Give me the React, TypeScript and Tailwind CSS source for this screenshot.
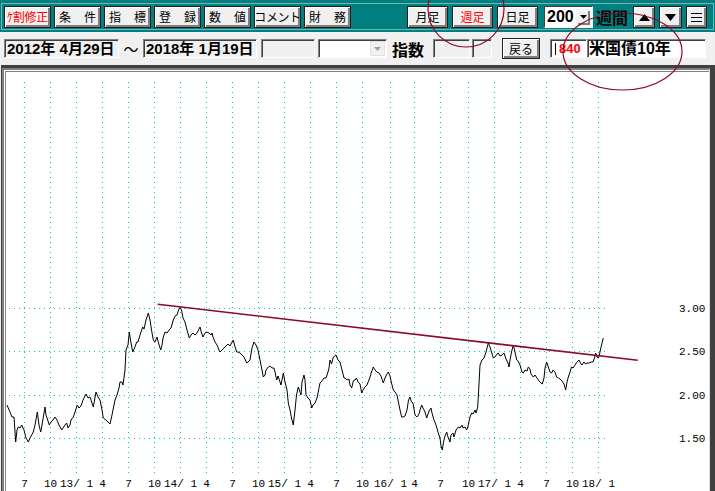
import clsx from 'clsx'
import type { ReactNode } from 'react'

const jp = "font-['Noto_Sans_CJK_JP','Noto_Sans',sans-serif]"
const mixed = "font-['Liberation_Sans','Noto_Sans_CJK_JP',sans-serif]"
const raised =
  'bg-[#f0f0f0] border border-[#202020] shadow-[inset_1px_1px_0_#ffffff,inset_-2px_-2px_0_#808080]'
const sunken =
  'border border-t-[#808080] border-l-[#808080] border-b-white border-r-white shadow-[inset_1px_1px_0_#404040]'

// weekly yield line, page coordinates
const series = [
  7, 405, 10, 412, 12, 417, 14, 417, 15.7, 442, 17, 430, 18.3, 427, 20, 428, 21.7, 425, 24, 430, 26, 438, 28.3, 442,
  30, 438, 33.3, 432, 35, 425, 37.3, 412, 39, 425, 40.7, 432, 42, 425, 45, 407, 46, 415, 47, 418, 49.3, 425, 51, 422,
  53, 420, 55, 417, 57, 420, 59, 425, 61.7, 430, 63, 428, 65, 425, 66.7, 423, 68, 428, 70, 425, 71, 420, 73.3, 417,
  75, 412, 77.3, 405, 79, 408, 81, 406, 83, 400, 86, 394, 88, 398, 90, 397, 92, 403, 93.3, 407, 96, 392, 98, 397, 100,
  400, 102, 410, 103.3, 418, 106, 420, 108, 422, 110, 424, 112, 415, 114, 405, 115, 400, 117, 395, 119, 388, 120, 382,
  122, 382, 123, 385, 125, 370, 126, 350, 128, 345, 129.3, 332, 130.5, 340, 132.7, 352, 134.5, 348, 136.7, 342, 138,
  342, 140, 335, 142.7, 327, 144, 329, 146, 320, 148.3, 313, 150, 320, 151.5, 330, 153.3, 340, 155, 342, 157, 337,
  158.5, 343, 160.7, 350, 162, 345, 163, 338, 165, 332, 167, 333, 169, 330, 171, 328, 173.3, 320, 175, 316, 177, 315,
  178.5, 310, 180, 307.3, 181.5, 310, 183, 318, 185, 322, 187, 330, 189.3, 338, 191, 335, 193, 333, 195, 335, 197, 333,
  198.5, 330, 200, 327, 201.5, 333, 203, 337, 205, 333, 207, 332, 209, 333, 211, 335, 212, 333, 213, 337, 215, 342,
  217, 345, 219, 350, 220, 352, 222, 350, 224, 348, 226, 346, 228, 344, 230, 346, 232, 342, 233.3, 340, 234.5, 345,
  236.7, 352, 238, 352, 240, 353, 242, 355, 244, 357, 246.7, 363, 248, 362, 250, 360, 252, 348, 254, 342, 256, 345,
  258, 350, 260, 360, 262, 370, 263.3, 377, 265, 375, 266, 370, 268.3, 367, 270, 366, 272, 368, 274, 368, 275, 372,
  276.7, 380, 278, 376, 280, 382, 281, 385, 283.3, 373, 285, 382, 287, 390, 288.3, 403, 290, 410, 291.5, 418, 293.3,
  425, 295, 410, 296.5, 395, 298.3, 387, 300, 392, 301, 395, 302, 382, 304, 375, 305, 380, 306, 395, 308, 398, 310,
  400, 311.7, 408, 313, 405, 315, 403, 317, 398, 319, 388, 320, 383, 322, 381, 324, 378, 326, 378, 328, 372, 329, 368,
  330, 360, 331.5, 364, 333, 358, 334.5, 356, 336, 355, 338, 360, 340, 362, 342, 370, 344, 378, 345, 378, 347, 380,
  349, 379, 350, 385, 351.7, 388, 353, 382, 354, 380, 355, 380, 356.5, 378, 358, 382, 360, 384, 361.7, 393, 363, 390,
  365, 387, 367, 385, 368.5, 381, 370, 377, 371.5, 372, 373.3, 367, 375, 370, 377, 372, 379, 373, 381, 376, 383.3, 383,
  385, 378, 387, 374, 388.3, 372, 390, 376, 391.5, 383, 393.3, 390, 395, 392, 397, 395, 398, 400, 400, 410, 401.7,
  417, 403, 417, 405, 416, 407, 410, 408.5, 400, 410, 397, 411.5, 402, 413, 403, 415, 415, 417, 417, 419, 414, 420,
  410, 421.7, 405, 423, 408, 425, 412, 426.7, 418, 428, 414, 429.5, 410, 431, 408, 432, 413, 434, 420, 436, 425,
  438.3, 433, 440, 438, 441, 446, 442.3, 450, 443.5, 442, 445, 436, 446.7, 432, 448, 437, 450, 442, 451, 435, 453,
  433, 454, 437, 456, 430, 458.3, 427, 460, 428, 462, 425, 463, 428, 465, 427, 466.7, 430, 468, 426, 470, 417, 471.7,
  413, 473, 414, 475, 410, 476, 413, 477.7, 407, 478.5, 393, 480, 365, 482, 360, 484, 358, 486, 352, 488.3, 343, 490,
  347, 491.5, 352, 493.3, 358, 495, 357, 497, 354, 498.3, 353, 500, 356, 502, 355, 504, 353, 506, 359, 508, 363, 509,
  367, 510, 360, 511.5, 352, 513.3, 345, 515, 352, 516.7, 360, 518, 361, 520, 365, 522, 372, 523.3, 373, 525, 370,
  527, 371, 528.3, 367, 530, 369, 531, 374, 533.3, 377, 535, 375, 537, 378, 539, 381, 541, 383, 542.3, 384, 544, 378,
  545, 368, 546.7, 362, 548, 366, 550, 372, 551.7, 373, 553, 370, 555, 372, 556.5, 377, 558.3, 378, 560, 379, 562,
  381, 564, 384, 565.7, 390, 567, 382, 568.3, 377, 570, 372, 571.5, 367, 573, 368, 575, 365, 577, 362, 579, 360,
  580.5, 363, 582, 365, 584, 362, 585.5, 364, 587, 363, 589, 363, 591, 362, 593, 362, 594.5, 358, 595.7, 353, 597,
  357, 598.5, 358, 600, 352, 601.5, 345, 603.3, 338,
]
const seriesPts = series.reduce<string[]>((acc, v, i) => {
  if (i % 2 === 1) acc.push(`${series[i - 1]},${v}`)
  return acc
}, [])

const gridX = [24, 50, 76, 102, 128, 154, 180, 206, 232, 258, 284, 310, 336, 362, 390, 414, 440, 468, 494, 520, 546, 572, 598]
const xLabels = ['7', '10', '13/ 1', '4', '7', '10', '14/ 1', '4', '7', '10', '15/ 1', '4', '7', '10', '16/ 1', '4', '7', '10', '17/ 1', '4', '7', '10', '18/ 1']
const gridY = [
  { y: 308, label: '3.00' },
  { y: 351, label: '2.50' },
  { y: 395, label: '2.00' },
  { y: 438, label: '1.50' },
]

function Btn({ children, className }: { children: ReactNode; className?: string }) {
  return (
    <div className={clsx('h-[22px] shrink-0 flex items-center text-[12px] leading-none whitespace-nowrap overflow-hidden', raised, className)}>
      {children}
    </div>
  )
}

function Spread({ a, b }: { a: string; b: string }) {
  return (
    <Btn className="w-[47px] justify-between px-[4px] text-black">
      <span>{a}</span>
      <span>{b}</span>
    </Btn>
  )
}

function Tri({ down }: { down?: boolean }) {
  return (
    <svg width="11" height="7" viewBox="0 0 11 7">
      <polygon points={down ? '0,0 11,0 5.5,7' : '5.5,0 11,7 0,7'} fill="#000" />
    </svg>
  )
}

export default function App() {
  return (
    <div className={clsx('relative w-[715px] h-[491px] overflow-hidden bg-[#f0f0f0] flex flex-col', jp)}>
      {/* toolbar */}
      <div className="h-[32px] shrink-0 bg-[#008080] pt-[3px] px-[1px]">
        <div className="h-[27px] border border-[#7fb3b3] flex items-start pt-[2px] pl-[2px]">
          <div className="flex gap-[3px]">
            <Btn className="w-[47px] justify-center text-[11px] tracking-[-0.3px] text-[#ff0000]">ｹ割修正</Btn>
            <Spread a="条" b="件" />
            <Spread a="指" b="標" />
            <Spread a="登" b="録" />
            <Spread a="数" b="値" />
            <Btn className="w-[47px] justify-center text-[11px] tracking-[-0.4px] text-black">コメント</Btn>
            <Spread a="財" b="務" />
          </div>
          <div className="ml-[56px] flex gap-[4px]">
            <Btn className="w-[41px] justify-center">月足</Btn>
            <Btn className="w-[41px] justify-center text-[#ff0000]">週足</Btn>
            <Btn className="w-[41px] justify-center">日足</Btn>
          </div>
          <div className="ml-[6px] w-[49px] h-[22px] bg-white border border-t-[#404040] border-l-[#404040] border-b-white border-r-white flex items-center">
            <span className={clsx('pl-[2px] text-[16px] font-bold leading-none', mixed)}>200</span>
            <div className={clsx('ml-auto mr-[1px] w-[15px] h-[17px] flex items-center justify-center', raised, 'border-[#f0f0f0]')}>
              <svg width="7" height="4" viewBox="0 0 7 4">
                <polygon points="0,0 7,0 3.5,4" fill="#000" />
              </svg>
            </div>
          </div>
          <span className="ml-[3px] w-[37px] h-[22px] flex items-center text-[16px] font-bold leading-none">週間</span>
          <Btn className="w-[22px] justify-center">
            <Tri />
          </Btn>
          <Btn className="ml-[4px] w-[23px] justify-center">
            <Tri down />
          </Btn>
          <Btn className="ml-[4px] w-[21px] justify-center">
            <svg width="11" height="9" viewBox="0 0 11 9">
              <path d="M0 0.5H11M0 4.5H11M0 8.5H11" stroke="#000" strokeWidth="1" />
            </svg>
          </Btn>
        </div>
      </div>

      {/* period row */}
      <div className="h-[33px] shrink-0 bg-[#f0f0f0] pt-[7px] pl-[4px] flex items-start">
        <div className={clsx(sunken, mixed, 'w-[115px] h-[19px] shrink-0 bg-[#f0f0f0] flex items-center pl-[2px] text-[15px] font-bold leading-none whitespace-nowrap overflow-hidden')}>
          2012年 4月29日
        </div>
        <span className="ml-[4px] w-[16px] h-[19px] shrink-0 flex items-center justify-center text-[15px] leading-none">～</span>
        <div className={clsx(sunken, mixed, 'ml-[4px] w-[114px] h-[19px] shrink-0 bg-[#f0f0f0] flex items-center pl-[2px] text-[15px] font-bold leading-none whitespace-nowrap overflow-hidden')}>
          2018年 1月19日
        </div>
        <div className={clsx(sunken, 'ml-[4px] w-[54px] h-[19px] shrink-0 bg-[#f0f0f0]')} />
        <div className={clsx(sunken, 'ml-[3px] w-[69px] h-[19px] shrink-0 bg-white flex justify-end items-center pr-[1px]')}>
          <div className="w-[15px] h-[15px] bg-[#f0f0f0] border border-[#e0e0e0] flex items-center justify-center">
            <svg width="7" height="4" viewBox="0 0 7 4">
              <polygon points="0,0 7,0 3.5,4" fill="#a0a0a0" />
            </svg>
          </div>
        </div>
        <span className="ml-[5px] w-[34px] h-[19px] shrink-0 flex items-center text-[16px] font-bold leading-none">指数</span>
        <div className={clsx(sunken, 'ml-[7px] w-[37px] h-[19px] shrink-0 bg-[#f0f0f0]')} />
        <div className={clsx(sunken, 'ml-[2px] w-[20px] h-[19px] shrink-0 bg-[#f0f0f0]')} />
        <div className={clsx('ml-[10px] -mt-[1px] w-[38px] h-[21px] shrink-0 flex items-center justify-center text-[12px] leading-none', raised)}>
          戻る
        </div>
        <div className={clsx(sunken, 'ml-[10px] w-[37px] h-[19px] shrink-0 bg-white flex items-center pl-[4px] leading-none')}>
          <span className="w-px h-[12px] bg-black" />
          <span className="ml-[3px] text-[13px] font-bold text-[#ff0000] font-['Liberation_Sans',sans-serif]">840</span>
        </div>
        <div className={clsx(sunken, mixed, 'w-[119px] h-[19px] shrink-0 bg-white flex items-center pl-[1px] text-[16px] font-bold leading-none whitespace-nowrap')}>
          米国債10年
        </div>
      </div>

      {/* chart */}
      <div className="flex-1 min-h-0 border-l border-[#f0f0f0] bg-[#404040] pt-[3px] pl-px pr-[5px]">
        <div className="h-full border-l-2 border-t-2 border-[#808080] border-r border-r-[#dcdcdc]">
          <div className="h-full border-l border-t border-white">
            <div className="h-full border-l border-t border-[#808080] bg-white">
              <svg className="block w-full h-full overflow-visible">
                <g transform="translate(-6,-72)">
                  {gridX.map((x) => (
                    <line key={`v${x}`} x1={x + 0.5} y1={82} x2={x + 0.5} y2={475} stroke="#00c8c8" strokeDasharray="1 4" shapeRendering="crispEdges" />
                  ))}
                  {gridY.map((g) => (
                    <line key={`h${g.y}`} x1={9} y1={g.y + 0.5} x2={606} y2={g.y + 0.5} stroke="#00c8c8" strokeDasharray="1 4" shapeRendering="crispEdges" />
                  ))}
                  {gridY.map((g) => (
                    <text key={`l${g.y}`} x={679} y={g.y + 4} fontSize={11} fontFamily="'Liberation Mono', monospace" fill="#000">
                      {g.label}
                    </text>
                  ))}
                  {gridX.map((x, i) => (
                    <text key={`t${x}`} x={x + 0.5} y={487} fontSize={11} fontFamily="'Liberation Mono', monospace" textAnchor="middle" fill="#000" xmlSpace="preserve">
                      {xLabels[i]}
                    </text>
                  ))}
                  <polyline points={seriesPts.join(' ')} fill="none" stroke="#000" strokeWidth={1} />
                  <line x1={157.7} y1={304.3} x2={637.7} y2={360.3} stroke="#8c0a28" strokeWidth={1.6} />
                </g>
              </svg>
            </div>
          </div>
        </div>
      </div>

      {/* hand-drawn marks over the window */}
      <svg className="absolute inset-0 pointer-events-none" width="715" height="491">
        <ellipse cx={466} cy={9} rx={38} ry={38} fill="none" stroke="#8c0a28" strokeWidth={1.2} />
        <ellipse cx={622.5} cy={51.5} rx={59.5} ry={38.5} fill="none" stroke="#8c0a28" strokeWidth={1.2} />
      </svg>
    </div>
  )
}
